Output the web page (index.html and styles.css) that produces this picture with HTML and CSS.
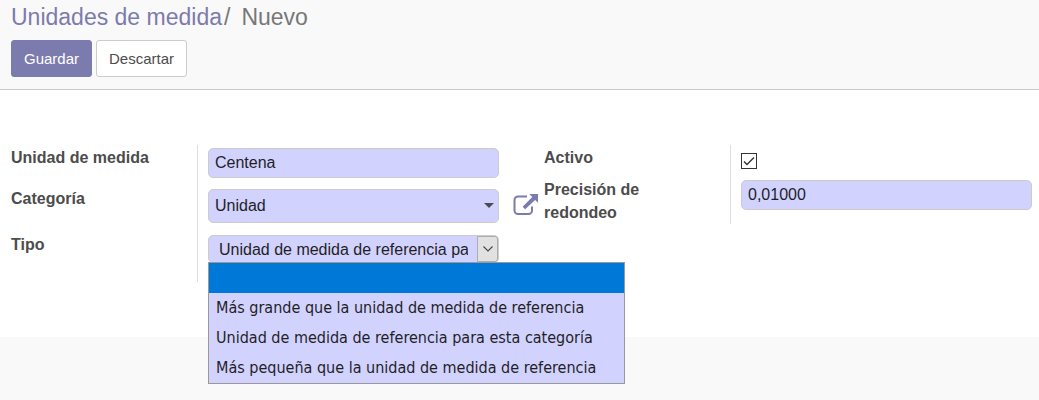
FILE: index.html
```html
<!DOCTYPE html>
<html lang="es">
<head>
<meta charset="utf-8">
<title>Unidades de medida / Nuevo</title>
<link rel="stylesheet" href="styles.css">
</head>
<body>
<header class="control-panel">
  <nav class="breadcrumb"><a href="#">Unidades de medida</a><span class="slash">/</span><span>Nuevo</span></nav>
  <div class="actions">
    <button type="button" class="btn btn-primary">Guardar</button>
    <button type="button" class="btn">Descartar</button>
  </div>
</header>
<main class="sheet">
  <form class="form">
    <div class="group">
      <div class="row">
        <label class="label" for="name">Unidad de medida</label>
        <div class="cell"><input class="field" id="name" type="text" value="Centena"></div>
      </div>
      <div class="row">
        <label class="label" for="category">Categoría</label>
        <div class="cell combo">
          <input class="field field-tall" id="category" type="text" value="Unidad">
          <svg class="caret" width="10" height="5" viewBox="0 0 10 5" aria-hidden="true"><path d="M0 0h10L5 5z" fill="#4c4c4c"/></svg>
        </div>
      </div>
      <div class="row">
        <label class="label" for="type">Tipo</label>
        <div class="cell cell-last">
          <div class="picker">
            <select class="field select" id="type">
              <option>Unidad de medida de referencia para esta categoría</option>
            </select>
            <span class="arrow"><svg width="10" height="6" viewBox="0 0 10 6" aria-hidden="true"><path d="M.5.5 5 5 9.500.5" fill="none" stroke="#444" stroke-width="1.100"/></svg></span>
            <ul class="menu" role="listbox" aria-label="Tipo">
              <li class="option option-active" role="option" aria-selected="true"></li>
              <li class="option" role="option">Más grande que la unidad de medida de referencia</li>
              <li class="option" role="option">Unidad de medida de referencia para esta categoría</li>
              <li class="option" role="option">Más pequeña que la unidad de medida de referencia</li>
            </ul>
          </div>
        </div>
      </div>
    </div>
    <button type="button" class="external" aria-label="Abrir registro">
      <svg width="25" height="22" viewBox="0 0 25 22" aria-hidden="true"><path d="M14 2.500H5A3.500 3.500 0 0 0 1.500 6v10.500A3.500 3.500 0 0 0 5 20h10.500a3.500 3.500 0 0 0 3.500-3.500V12.500" fill="none" stroke="#7c7bad" stroke-width="2"/><path d="M16.300 0H25v8.800l-2.900-2.900-9.900 9.400-2.600-2.600 9.700-9.800z" fill="#7c7bad"/></svg>
    </button>
    <div class="group">
      <div class="row">
        <label class="label" for="active">Activo</label>
        <div class="cell cell-check"><input class="check" id="active" type="checkbox" checked></div>
      </div>
      <div class="row">
        <label class="label" for="rounding">Precisión de redondeo</label>
        <div class="cell"><input class="field" id="rounding" type="text" value="0,01000"></div>
      </div>
    </div>
  </form>
</main>
</body>
</html>
```

FILE: styles.css
```css
* { box-sizing: border-box; }

body {
  min-height: 100vh;
  margin: 0;
  background: #f9f9f9;
  color: #4c4c4c;
  font: 16px/23px "Liberation Sans", Arial, sans-serif;
}

.control-panel {
  padding: 3px 11px 12px;
  border-bottom: 1px solid #c8c8c8;
}

.breadcrumb {
  display: flex;
  color: #777;
  font-size: 23px;
  line-height: 28px;
}

.breadcrumb a { color: #7c7bad; text-decoration: none; }
.slash { margin: 0 11px 0 2px; }

.actions { display: flex; gap: 4px; margin-top: 9px; }

.btn {
  height: 37px;
  padding: 0 12px;
  border: 1px solid #ccc;
  border-radius: 3px;
  background: #fff;
  color: #4c4c4c;
  font: inherit;
  font-size: 15px;
}

.btn-primary { border-color: #7c7bad; background: #7c7bad; color: #fff; }

.sheet { padding: 55px 7px 55px 11px; background: #fff; }
.form { display: flex; align-items: flex-start; }
.group { flex: 1 1 0; min-width: 0; }

.row { display: grid; grid-template-columns: 186fr 302fr; }

.label { padding: 1px 40px 0 0; font-weight: bold; }

.cell {
  padding: 3px 0 8px 10px;
  border-left: 1px solid #ddd;
}

.field {
  display: block;
  width: 100%;
  height: 30px;
  padding: 0 6px;
  border: 1px solid #ccc;
  border-radius: 5px;
  background: #d2d2ff;
  color: #1f1f1f;
  font: inherit;
}

.combo { position: relative; padding-bottom: 9px; }
.field-tall { height: 34px; }
.caret { position: absolute; right: 5px; top: 17px; }

.cell-last { padding-bottom: 19px; }
.picker { position: relative; }

.select {
  height: 28px;
  padding: 0 30px 0 10px;
  appearance: none;
}

.arrow {
  position: absolute;
  top: 1px;
  right: 1px;
  display: flex;
  align-items: center;
  justify-content: center;
  width: 21px;
  height: 26px;
  border: 1px solid #adadad;
  border-radius: 0 3px 3px 0;
  background: #e1e1e1;
  pointer-events: none;
}

.menu {
  position: absolute;
  top: 27px;
  left: 0;
  margin: 0;
  padding: 0;
  width: 417px;
  border: 1px solid #999;
  background: #d2d2ff;
  color: #1f1f1f;
  font-family: "DejaVu Sans Condensed", "Noto Sans", sans-serif;
  font-size: 16px;
  list-style: none;
}

.option { height: 30px; padding: 0 7px; line-height: 30px; white-space: nowrap; }
.option-active { background: #0078d7; }

.external {
  flex: none;
  width: 25px;
  height: 22px;
  margin: 49px 6px 0 14px;
  padding: 0;
  border: 0;
  background: none;
}

.external svg { display: block; }

.cell-check { padding: 8px 0 8px 10px; }

.check {
  display: block;
  width: 16px;
  height: 16px;
  margin: 0;
  border: 1px solid #333;
  appearance: none;
  background: #fff;
}

.check:checked {
  background: #fff url("data:image/svg+xml,%3Csvg xmlns='http://www.w3.org/2000/svg' viewBox='0 0 14 14'%3E%3Cpath d='M2 7.500 5 10.500 12 3.500' fill='none' stroke='%23333' stroke-width='1.400'/%3E%3C/svg%3E") center / 14px 14px no-repeat;
}
```
